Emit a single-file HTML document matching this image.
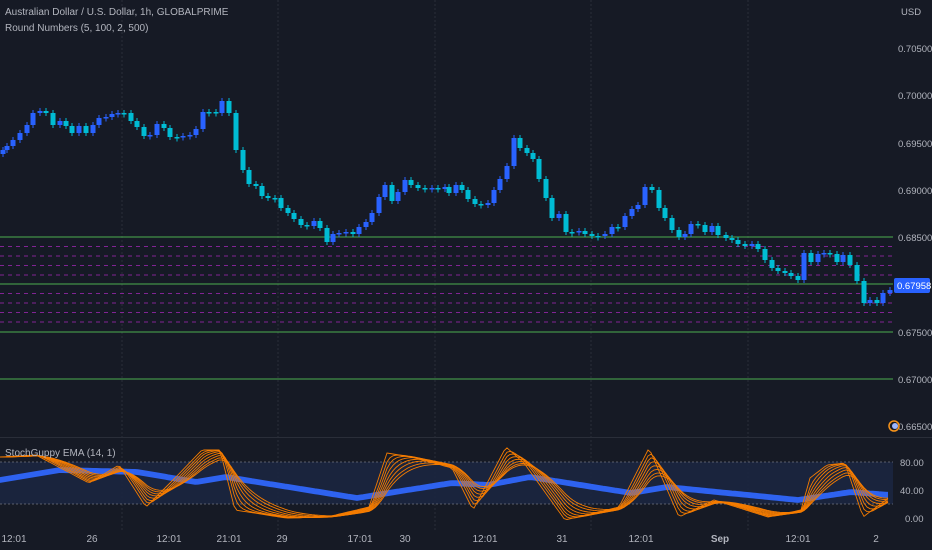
<!DOCTYPE html>
<html><head><meta charset="utf-8"><style>
html,body{margin:0;padding:0;background:#161a25;width:932px;height:550px;overflow:hidden}
svg{display:block}
text{font-family:"Liberation Sans",sans-serif;fill:#b2b5be}
</style></head><body>
<svg id="s" width="932" height="550" xmlns="http://www.w3.org/2000/svg">
<rect width="932" height="550" fill="#161a25"/>
<g id="grid"></g>
<rect x="0" y="462" width="893" height="42" fill="#1b2640" opacity="0.9"/>
<line x1="0" y1="437.5" x2="932" y2="437.5" stroke="#2a2e39"/>
<g id="lines"></g>
<g id="candles"></g>
<g id="osc"></g>
<text x="5" y="15" font-size="10" fill="#d1d4dc">Australian Dollar / U.S. Dollar, 1h, GLOBALPRIME</text>
<text x="5" y="31" font-size="10">Round Numbers (5, 100, 2, 500)</text>
<text x="5" y="456" font-size="10">StochGuppy EMA (14, 1)</text>
<text x="901" y="15" font-size="9.5">USD</text>
<g id="px" font-size="9.5"></g>
<rect x="894" y="278" width="36" height="15" rx="2" fill="#2962ff"/>
<text x="897" y="289" font-size="9.5" style="fill:#fff">0.67958</text>
<g id="tx" font-size="10"></g>
<circle cx="894" cy="426" r="5" fill="none" stroke="#f7931a" stroke-width="1.5"/>
<circle cx="895" cy="426" r="3" fill="#9db6ff"/>
</svg>
<script>
const NS="http://www.w3.org/2000/svg";
function el(p,t,a){const e=document.createElementNS(NS,t);for(const k in a)e.setAttribute(k,a[k]);document.getElementById(p).appendChild(e);return e;}
[122,278,435,591,748].forEach(x=>el("grid","line",{x1:x,y1:0,x2:x,y2:530,stroke:"#2a2e39","stroke-dasharray":"2 2"}));
[237,284,332,379].forEach(y=>el("lines","line",{x1:0,y1:y,x2:893,y2:y,stroke:"#4caf50","stroke-width":1}));
[246.5,256,265.5,275,293.5,303,312.5,322].forEach(y=>el("lines","line",{x1:0,y1:y,x2:893,y2:y,stroke:"#9c27b0","stroke-width":1,"stroke-dasharray":"4 4",opacity:0.8}));
[[462,"80.00"],[490,"40.00"],[518,"0.00"]].forEach(a=>{const t=el("px","text",{x:a[1]=="0.00"?905:900,y:a[0]+4});t.textContent=a[1];});
[462,504].forEach(y=>el("lines","line",{x1:0,y1:y,x2:893,y2:y,stroke:"#787b86","stroke-dasharray":"2 2",opacity:0.7}));
[[48,"0.70500"],[95,"0.70000"],[143,"0.69500"],[190,"0.69000"],[237,"0.68500"],[332,"0.67500"],[379,"0.67000"],[426,"0.66500"]].forEach(a=>{const t=el("px","text",{x:898,y:a[0]+4});t.textContent=a[1];});
[[14,"12:01"],[92,"26"],[169,"12:01"],[229,"21:01"],[282,"29"],[360,"17:01"],[405,"30"],[485,"12:01"],[562,"31"],[641,"12:01"],[720,"Sep"],[798,"12:01"],[876,"2"]].forEach(a=>{const t=el("tx","text",{x:a[0],y:542,"text-anchor":"middle"});t.textContent=a[1];if(a[1]=="Sep")t.setAttribute("font-weight","bold");});
const C=[[3,150],[7,146],[13,140],[20,133],[27,125],[33,113],[40,111],[46,113],[53,125],[60,121],[66,126],[72,133],[79,126],[86,133],[93,125],[99,118],[106,117],[112,114],[118,113],[124,113],[131,121],[137,127],[144,136],[150,135],[157,124],[164,128],[170,137],[177,137],[183,136],[190,135],[196,129],[203,112],[209,112],[216,113],[222,101],[229,113],[236,150],[243,170],[249,184],[256,186],[262,196],[268,198],[275,198],[281,208],[288,213],[294,219],[301,225],[307,226],[314,221],[320,228],[327,242],[333,234],[339,233],[346,232],[353,234],[359,227],[366,222],[372,213],[379,197],[385,185],[392,201],[398,192],[405,180],[411,185],[418,188],[425,189],[432,188],[438,189],[445,187],[449,193],[456,185],[462,190],[468,199],[475,204],[481,205],[488,203],[494,190],[500,179],[507,166],[514,138],[520,148],[527,153],[533,159],[539,179],[546,198],[552,218],[559,214],[566,232],[572,232],[579,231],[585,234],[592,236],[598,236],[605,234],[612,227],[618,227],[625,216],[632,209],[638,205],[645,187],[652,190],[659,208],[665,218],[672,230],[679,237],[685,234],[691,224],[698,225],[705,232],[712,226],[718,235],[726,238],[732,240],[738,244],[745,246],[752,244],[758,249],[765,260],[772,268],[778,271],[785,273],[791,276],[798,280],[804,253],[811,262],[818,254],[824,253],[830,254],[837,262],[843,255],[850,265],[857,281],[864,303],[870,300],[877,303],[883,293],[890,290]];
let prev=C[0][1]+4;
C.forEach((c,i)=>{const o=prev,cl=c[1];const up=cl<o;const col=up?"#2962ff":"#00bcd4";
let t=Math.min(o,cl),b=Math.max(o,cl);if(b-t<1.5){b=t+1.5;}
el("candles","line",{x1:c[0],y1:t-3,x2:c[0],y2:b+3,stroke:col,"stroke-width":1});
el("candles","rect",{x:c[0]-2.5,y:t,width:5,height:b-t,fill:col});prev=cl;});
function interp(pts,x){for(let i=0;i<pts.length-1;i++){if(x>=pts[i][0]&&x<=pts[i+1][0]){const f=(x-pts[i][0])/(pts[i+1][0]-pts[i][0]);return pts[i][1]+f*(pts[i+1][1]-pts[i][1]);}}return pts[pts.length-1][1];}
const B=[[0,480],[60,470],[137,472],[196,482],[226,477],[357,498],[452,483],[488,485],[530,477],[631,493],[667,487],[798,500],[851,492],[890,495]];
const F=[[0,457],[36,455],[89,483],[119,465],[146,507],[173,480],[202,450],[220,450],[235,510],[286,518],[327,517],[369,507],[387,453],[411,457],[452,468],[473,510],[506,447],[524,463],[565,520],[619,507],[649,448],[679,517],[714,500],[768,517],[801,510],[810,478],[827,465],[845,463],[863,517],[890,497]];
for(let k=-4;k<=4;k++){let d="";for(let x=0;x<=890;x+=3){d+=(x?"L":"M")+x+" "+(interp(B,x)+k*0.6).toFixed(1);}el("osc","path",{d:d,fill:"none",stroke:"#2f63f0","stroke-width":1});}
const xs=[];for(let x=0;x<=890;x+=3)xs.push(x);
const fast=xs.map(x=>interp(F,x));
[1,0.5,0.35,0.26,0.2,0.16,0.13,0.11].forEach(a=>{let v=fast[0];let d="";xs.forEach((x,i)=>{v=v+a*(fast[i]-v);d+=(i?"L":"M")+x+" "+v.toFixed(1);});el("osc","path",{d:d,fill:"none",stroke:"#f57c00","stroke-width":0.9});});
</script>
</body></html>
